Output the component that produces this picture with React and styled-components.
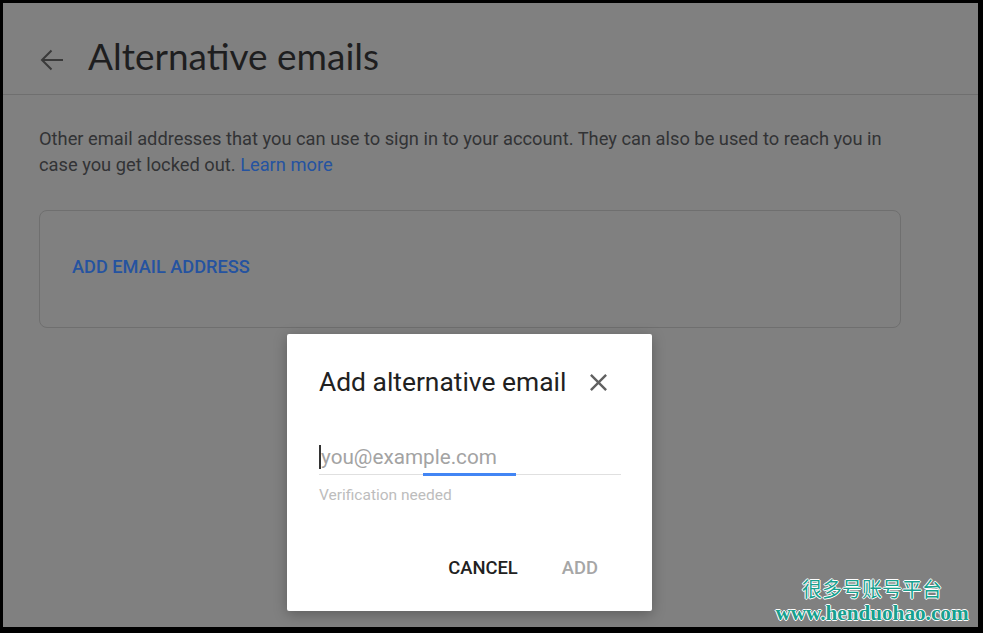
import React from "react";
import styled, { createGlobalStyle } from "styled-components";

const Global = createGlobalStyle`
  html, body { margin: 0; padding: 0; background: #000; }
  body { font-family: Roboto, "Liberation Sans", sans-serif; }
  * { box-sizing: border-box; }
`;

const Frame = styled.div`
  padding: 3px 5px 6px 3px;
  width: 983px;
  height: 633px;
  background: #000;
`;

const Screen = styled.div`
  position: relative;
  width: 975px;
  height: 624px;
  overflow: hidden;
  background: #808080;
`;

const Header = styled.header`
  display: flex;
  align-items: flex-start;
  gap: 24px;
  padding: 31px 0 16px 37px;
  border-bottom: 1px solid #6f6f6f;
`;

const BackIcon = styled.svg`
  width: 24px;
  height: 22px;
  margin-top: 15px;
  flex: none;
`;

const Title = styled.h1`
  margin: 0;
  font-family: Lato, "Open Sans", sans-serif;
  font-weight: 400;
  font-size: 37px;
  line-height: 44px;
  color: #1e1e1f;
`;

const Content = styled.main`
  padding: 31px 0 0 36px;
  width: 898px;
`;

const Description = styled.p`
  margin: 0;
  font-size: 18.3px;
  line-height: 26px;
  color: #323335;
`;

const Link = styled.a`
  color: #2553a0;
  text-decoration: none;
`;

const Card = styled.section`
  margin-top: 32px;
  height: 118px;
  border: 1px solid #6f6f6f;
  border-radius: 8px;
  display: flex;
  align-items: center;
  padding: 0 0 6px 32px;
`;

const TextButton = styled.button`
  border: none;
  background: none;
  padding: 0;
  font-family: Roboto, "Liberation Sans", sans-serif;
  font-weight: 500;
  font-size: 18.2px;
  text-transform: uppercase;
  color: ${(p) => p.$color || "#2553a0"};
  cursor: pointer;
`;

const Dialog = styled.div`
  position: absolute;
  left: 284px;
  top: 331px;
  width: 365px;
  background: #fff;
  border-radius: 2px;
  box-shadow: 0 3px 14px rgba(0, 0, 0, 0.28);
  padding: 32px 31px 26px 32px;
  display: flex;
  flex-direction: column;
`;

const TitleRow = styled.div`
  display: flex;
  align-items: center;
  justify-content: space-between;
  height: 32px;
`;

const DialogTitle = styled.h2`
  margin: 0;
  font-weight: 400;
  font-size: 26.4px;
  line-height: 32px;
  color: #212121;
`;

const CloseButton = styled.button`
  border: none;
  background: none;
  padding: 0;
  margin-right: 8px;
  width: 29px;
  height: 29px;
  display: flex;
  cursor: pointer;
`;

const Field = styled.div`
  position: relative;
  margin-top: 45px;
  padding-bottom: 3px;
  border-bottom: 1px solid #e0e0e0;
`;

const Input = styled.input`
  display: block;
  width: 100%;
  height: 28px;
  border: none;
  outline: none;
  padding: 0 0 0 2px;
  background: transparent;
  font-family: Roboto, "Liberation Sans", sans-serif;
  font-size: 20.7px;
  color: #212121;
  &::placeholder { color: #a3a3a3; }
`;

const Caret = styled.span`
  position: absolute;
  left: 0;
  top: 2px;
  width: 1.5px;
  height: 24px;
  background: #333;
`;

const FocusBar = styled.span`
  position: absolute;
  bottom: -2px;
  height: 3px;
  background: #4285f4;
`;

const Hint = styled.div`
  margin-top: 10px;
  font-size: 15.5px;
  line-height: 20px;
  color: #bdbdbd;
`;

const Actions = styled.div`
  display: flex;
  justify-content: flex-end;
  gap: 28px;
  margin-top: 44px;
  margin-right: 15px;
`;

const DialogButton = styled(TextButton)`
  height: 36px;
  padding: 0 8px;
  font-size: 18.4px;
`;

const Watermark = styled.div`
  position: absolute;
  right: 8px;
  bottom: 3px;
  width: 196px;
  display: flex;
  flex-direction: column;
  align-items: center;
  gap: 3px;
  color: #17a08e;
  text-shadow: 1px 0 0 #fff, -1px 0 0 #fff, 0 1px 0 #fff, 0 -1px 0 #fff;
`;

const WatermarkCn = styled.div`
  font-family: "Noto Sans CJK SC", sans-serif;
  font-size: 20px;
  line-height: 21px;
`;

const WatermarkUrl = styled.div`
  font-family: "Liberation Serif", serif;
  font-weight: 700;
  font-size: 21.2px;
  line-height: 22px;
`;

export default function App() {
  return (
    <Frame>
      <Global />
      <Screen>
        <Header>
          <BackIcon viewBox="0 0 24 22" fill="none" stroke="#3a3a3a" strokeWidth="2">
            <path d="M23 11H2" />
            <path d="M11.5 1.5L2 11l9.5 9.5" />
          </BackIcon>
          <Title>Alternative emails</Title>
        </Header>
        <Content>
          <Description>
            Other email addresses that you can use to sign in to your account. They can also be used to reach you in
            case you get locked out. <Link href="#">Learn more</Link>
          </Description>
          <Card>
            <TextButton>Add email address</TextButton>
          </Card>
        </Content>

        <Dialog role="dialog">
          <TitleRow>
            <DialogTitle>Add alternative email</DialogTitle>
            <CloseButton aria-label="Close">
              <svg viewBox="0 0 24 24" width="29" height="29" fill="#616161">
                <path d="M19 6.41L17.59 5 12 10.59 6.41 5 5 6.41 10.59 12 5 17.59 6.41 19 12 13.41 17.59 19 19 17.59 13.41 12z" />
              </svg>
            </CloseButton>
          </TitleRow>
          <Field>
            <Input placeholder="you@example.com" />
            <Caret />
            <FocusBar style={{ left: 104, width: 93 }} />
          </Field>
          <Hint>Verification needed</Hint>
          <Actions>
            <DialogButton $color="#212121">Cancel</DialogButton>
            <DialogButton $color="#a6a6a6">Add</DialogButton>
          </Actions>
        </Dialog>

        <Watermark>
          <WatermarkCn>很多号账号平台</WatermarkCn>
          <WatermarkUrl>www.henduohao.com</WatermarkUrl>
        </Watermark>
      </Screen>
    </Frame>
  );
}
